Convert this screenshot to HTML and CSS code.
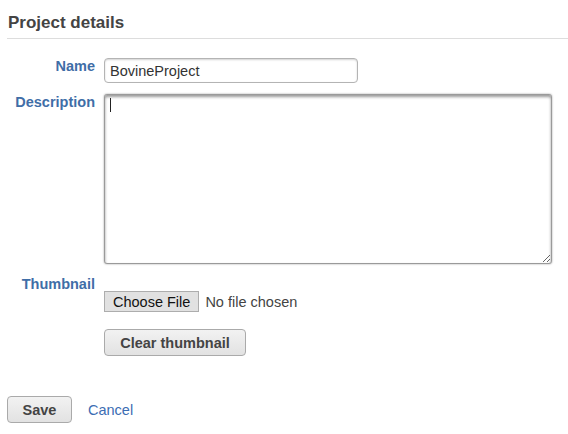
FILE: index.html
```html
<!DOCTYPE html>
<html>
<head>
<meta charset="utf-8">
<link rel="stylesheet" href="styles.css">
</head>
<body>
<div class="page">
  <h2 class="title">Project details</h2>
  <form class="form">
    <div class="row">
      <label class="label" for="name">Name</label>
      <div class="field"><input id="name" class="text-input" type="text" value="BovineProject"></div>
    </div>
    <div class="row row-desc">
      <label class="label" for="desc">Description</label>
      <div class="field">
        <div class="textarea-wrap">
          <textarea id="desc" class="textarea"></textarea>
          <span class="caret"></span>
        </div>
      </div>
    </div>
    <div class="row row-thumb">
      <label class="label">Thumbnail</label>
      <div class="field field-thumb">
        <div class="file">
          <button type="button" class="file-btn">Choose File</button>
          <span class="file-name">No file chosen</span>
        </div>
        <button type="button" class="btn btn-clear">Clear thumbnail</button>
      </div>
    </div>
    <div class="actions">
      <button type="button" class="btn btn-save">Save</button>
      <a class="cancel" href="#">Cancel</a>
    </div>
  </form>
</div>
</body>
</html>
```
FILE: styles.css
```css
html, body {
  margin: 0;
  padding: 0;
  background: #fff;
}
body {
  font-family: "Liberation Sans", Arial, sans-serif;
  color: #333;
}
.page {
  padding-left: 7px;
}
.title {
  margin: 0;
  padding: 13px 0 5px 1px;
  font-size: 17px;
  line-height: 20px;
  font-weight: bold;
  color: #444;
  border-bottom: 1px solid #ddd;
}
.form {
  margin-top: 19px;
}
.row {
  display: grid;
  grid-template-columns: 88px 1fr;
  column-gap: 9px;
}
.row-desc {
  margin-top: 11px;
}
.row-thumb {
  margin-top: 12px;
}
.label {
  text-align: right;
  font-size: 14.5px;
  line-height: 16px;
  font-weight: bold;
  color: #3f6ea7;
  padding-top: 0;
}
.text-input {
  box-sizing: border-box;
  width: 254px;
  height: 25px;
  margin: 0;
  padding: 0 5px;
  border: 1px solid #b4b4b4;
  border-radius: 4px;
  box-shadow: inset 0 1px 2px rgba(0,0,0,0.18);
  font-family: "Liberation Sans", Arial, sans-serif;
  font-size: 14.5px;
  color: #333;
  outline: none;
}
.textarea-wrap {
  position: relative;
  width: 448px;
  height: 170px;
}
.textarea {
  box-sizing: border-box;
  display: block;
  width: 448px;
  height: 170px;
  margin: 0;
  padding: 4px 5px;
  border: 1px solid #9a9a9a;
  border-radius: 3px;
  box-shadow: inset 0 2px 3px rgba(0,0,0,0.4), 0 0 2px rgba(0,0,0,0.4);
  font-family: "Liberation Sans", Arial, sans-serif;
  font-size: 14.5px;
  outline: none;
  resize: both;
}
.caret {
  position: absolute;
  left: 6px;
  top: 4px;
  width: 1px;
  height: 14px;
  background: #222;
}
.field-thumb {
  padding-top: 15px;
}
.file {
  display: flex;
  align-items: center;
}
.file-btn {
  box-sizing: border-box;
  height: 21px;
  margin: 0;
  padding: 0 8px;
  border: 1px solid #adadad;
  border-radius: 0;
  background: #e1e1e1;
  font-family: "Liberation Sans", Arial, sans-serif;
  font-size: 14.5px;
  color: #111;
}
.file-name {
  margin-left: 6px;
  font-size: 14.5px;
  color: #444;
}
.btn {
  box-sizing: border-box;
  height: 27px;
  margin: 0;
  border: 1px solid #aaa;
  border-radius: 4px;
  background: linear-gradient(#f2f2f2, #e2e2e2);
  font-family: "Liberation Sans", Arial, sans-serif;
  font-size: 14.5px;
  font-weight: bold;
  color: #444;
}
.btn-clear {
  display: block;
  width: 142px;
  margin-top: 17px;
}
.actions {
  display: flex;
  align-items: center;
  margin-top: 40px;
}
.btn-save {
  width: 65px;
}
.cancel {
  margin-left: 16px;
  font-size: 14.5px;
  color: #3c6db3;
  text-decoration: none;
}
```
